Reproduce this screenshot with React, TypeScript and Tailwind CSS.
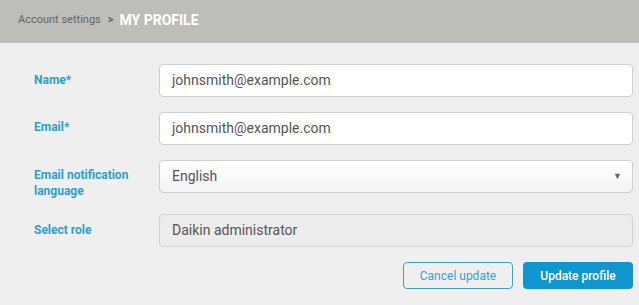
export default function App() {
  return (
    <div className="w-[639px] h-[305px] bg-[#efefef] font-['Roboto',sans-serif] overflow-hidden">
      {/* breadcrumb header */}
      <div className="h-[43px] bg-[#bdbdb9] flex items-center pl-[18px] pb-[2px]">
        <span className="text-[11px] text-[#666666]">Account settings</span>
        <span className="ml-[7px] text-[11px] font-bold text-[#5f5f5f]">&gt;</span>
        <span className="ml-[6px] text-[14px] font-bold text-white">MY PROFILE</span>
      </div>

      <div className="pl-[34px] pr-[6px] pt-[21px]">
        <div className="flex items-start">
          <label className="w-[125px] pt-[9px] text-[12px] font-bold text-[#2e9dd0] leading-[15px]">Name*</label>
          <div className="flex-1 h-[33px] bg-white border border-[#cfcfcf] rounded-[4px] flex items-center pl-[12px] text-[14px] text-[#555555]">
            johnsmith@example.com
          </div>
        </div>

        <div className="flex items-start mt-[15px]">
          <label className="w-[125px] pt-[8px] text-[12px] font-bold text-[#2e9dd0] leading-[15px]">Email*</label>
          <div className="flex-1 h-[33px] bg-white border border-[#cfcfcf] rounded-[4px] flex items-center pl-[12px] text-[14px] text-[#555555]">
            johnsmith@example.com
          </div>
        </div>

        <div className="flex items-start mt-[15px]">
          <label className="w-[125px] pt-[7px] pr-[20px] text-[12px] font-bold text-[#2e9dd0] leading-[16px]">
            Email notification language
          </label>
          <div className="flex-1 h-[33px] bg-gradient-to-b from-white to-[#f3f3f3] border border-[#cfcfcf] rounded-[4px] flex items-center justify-between pl-[12px] pr-[10px] text-[14px] text-[#555555]">
            <span>English</span>
            <span className="text-[9px] text-[#666666]">▼</span>
          </div>
        </div>

        <div className="flex items-start mt-[15px]">
          <label className="w-[125px] pt-[9px] text-[12px] font-bold text-[#2e9dd0] leading-[15px]">Select role</label>
          <div className="flex-1 h-[33px] bg-[#ececec] border border-[#d2d2d2] rounded-[4px] flex items-center pl-[12px] text-[14px] text-[#555555]">
            Daikin administrator
          </div>
        </div>

        <div className="flex justify-end gap-[10px] mt-[15px]">
          <button className="w-[110px] h-[27px] border border-[#3a9fd0] rounded-[4px] text-[12px] text-[#3a9fd0] bg-transparent">
            Cancel update
          </button>
          <button className="w-[110px] h-[27px] rounded-[4px] bg-[#0f96cf] text-[12px] font-medium text-white">
            Update profile
          </button>
        </div>
      </div>
    </div>
  );
}
